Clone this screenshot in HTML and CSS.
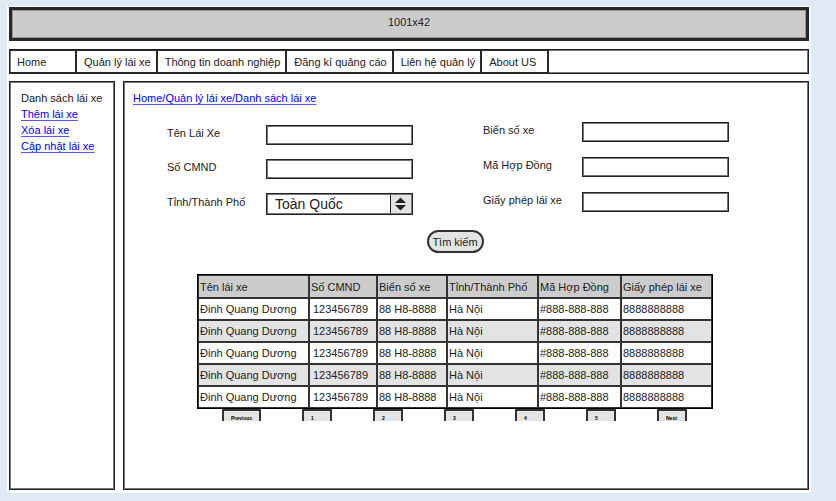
FILE: index.html
```html
<!DOCTYPE html>
<html lang="vi">
<head>
<meta charset="utf-8">
<title>Danh sách lái xe</title>
<link rel="stylesheet" href="styles.css">
</head>
<body>
<div class="sheet">
  <header class="banner">1001x42</header>
  <nav class="menu frame">
    <a class="menu-item menu-home" href="#">Home</a>
    <a class="menu-item" href="#">Quản lý lái xe</a>
    <a class="menu-item" href="#">Thông tin doanh nghiệp</a>
    <a class="menu-item" href="#">Đăng kí quảng cáo</a>
    <a class="menu-item" href="#">Liên hệ quản lý</a>
    <a class="menu-item menu-about" href="#">About US</a>
  </nav>
  <div class="columns">
    <aside class="sidebar frame">
      <span class="current">Danh sách lái xe</span>
      <a class="link" href="#">Thêm lái xe</a>
      <a class="link" href="#">Xóa lái xe</a>
      <a class="link" href="#">Cập nhật lái xe</a>
    </aside>
    <main class="content frame">
      <a class="link" href="#">Home/Quản lý lái xe/Danh sách lái xe</a>
      <form class="search" id="search">
        <div class="fields fields-left">
          <div class="field"><label for="name">Tên Lái Xe</label><input class="box" id="name" type="text"></div>
          <div class="field"><label for="cmnd">Số CMND</label><input class="box" id="cmnd" type="text"></div>
          <div class="field">
            <label for="province">Tỉnh/Thành Phố</label>
            <div class="picker">
              <select id="province"><option>Toàn Quốc</option></select>
              <svg class="stepper" viewBox="0 0 21 18" aria-hidden="true">
                <path d="M0 0h21v18H0z" fill="#e3e3e3"/>
                <path d="M0 0h1v18H0z" fill="#222"/>
                <path d="M10.500 2.500l5.500 5.500H5zM10.500 15.500l5.500-5.500H5z" fill="#222"/>
              </svg>
            </div>
          </div>
        </div>
        <div class="fields fields-right">
          <div class="field"><label for="plate">Biển số xe</label><input class="box" id="plate" type="text"></div>
          <div class="field"><label for="contract">Mã Hợp Đồng</label><input class="box" id="contract" type="text"></div>
          <div class="field"><label for="licence">Giấy phép lái xe</label><input class="box" id="licence" type="text"></div>
        </div>
      </form>
      <div class="results">
        <button class="submit" type="submit" form="search">Tìm kiếm</button>
        <table class="drivers">
          <colgroup><col class="c-name"><col class="c-cmnd"><col class="c-plate"><col class="c-province"><col class="c-contract"><col class="c-licence"></colgroup>
          <thead>
            <tr><th>Tên lái xe</th><th>Số CMND</th><th>Biển số xe</th><th>Tỉnh/Thành Phố</th><th>Mã Hợp Đồng</th><th>Giấy phép lái xe</th></tr>
          </thead>
          <tbody>
            <tr><td>Đinh Quang Dương</td><td>123456789</td><td>88 H8-8888</td><td>Hà Nội</td><td>#888-888-888</td><td>8888888888</td></tr>
            <tr><td>Đinh Quang Dương</td><td>123456789</td><td>88 H8-8888</td><td>Hà Nội</td><td>#888-888-888</td><td>8888888888</td></tr>
            <tr><td>Đinh Quang Dương</td><td>123456789</td><td>88 H8-8888</td><td>Hà Nội</td><td>#888-888-888</td><td>8888888888</td></tr>
            <tr><td>Đinh Quang Dương</td><td>123456789</td><td>88 H8-8888</td><td>Hà Nội</td><td>#888-888-888</td><td>8888888888</td></tr>
            <tr><td>Đinh Quang Dương</td><td>123456789</td><td>88 H8-8888</td><td>Hà Nội</td><td>#888-888-888</td><td>8888888888</td></tr>
          </tbody>
        </table>
        <div class="pager">
          <button class="page page-prev" type="button">Previous</button>
          <button class="page" type="button">1</button>
          <button class="page" type="button">2</button>
          <button class="page" type="button">3</button>
          <button class="page" type="button">4</button>
          <button class="page" type="button">5</button>
          <button class="page" type="button">Next</button>
        </div>
      </div>
    </main>
  </div>
</div>
</body>
</html>
```

FILE: styles.css
```css
* {
  box-sizing: border-box;
}

body {
  margin: 0;
  padding: 6px 25px 8px 7px;
  min-height: 100vh;
  display: flex;
  background: #e0eaf5;
  color: #222;
  font: 11px/16px "Liberation Sans", Arial, sans-serif;
}

.sheet {
  flex: 1;
  min-width: 0;
  display: flex;
  flex-direction: column;
  padding: 1px 2px 3px;
  background: #fff;
}

.frame,
.box,
.picker {
  border: 1px solid #222;
  box-shadow: inset 0 0 0 1px #777;
}

.banner {
  height: 34px;
  border: 3px solid #28282a;
  box-shadow: inset 0 0 0 1px #999;
  background: #ccc;
  padding-top: 4px;
  text-align: center;
}

.menu {
  display: flex;
  height: 25px;
  margin: 8px 0 7px;
}

.menu-item {
  display: flex;
  align-items: center;
  padding: 0 5px 0 7px;
  border: solid #28282a;
  border-width: 1px 2px 1px 0;
  color: inherit;
  text-decoration: none;
  white-space: nowrap;
}

.menu-home,
.menu-about {
  width: 67px;
}

.columns {
  flex: 1;
  display: flex;
  gap: 8px;
}

.sidebar {
  width: 106px;
  padding: 8px 0 8px 11px;
  display: flex;
  flex-direction: column;
  align-items: flex-start;
  white-space: nowrap;
}

.link {
  color: #00f;
  text-decoration: underline;
  text-decoration-color: #55f;
  text-underline-offset: 2px;
}

.content {
  flex: 1;
  min-width: 0;
  padding: 8px 0 0 9px;
}

.search {
  display: grid;
  grid-template-columns: repeat(2, minmax(0, 1fr));
  gap: 70px;
  padding: 16px 79px 0 34px;
}

.fields {
  display: flex;
  flex-direction: column;
}

.fields-left {
  gap: 14px;
  padding-top: 3px;
}

.fields-right {
  gap: 15px;
}

.field {
  display: flex;
  align-items: center;
}

.field label {
  width: 99px;
  padding-bottom: 4px;
}

.box {
  flex: 1;
  min-width: 0;
  height: 20px;
  padding: 0 6px;
  background: #fff;
  font: inherit;
}

.picker {
  position: relative;
  flex: 1;
  height: 22px;
}

.picker select {
  width: 100%;
  height: 20px;
  padding: 0 24px 0 8px;
  border: 0;
  appearance: none;
  background: transparent;
  color: #222;
  font: 14px/20px "Liberation Sans", Arial, sans-serif;
}

.stepper {
  position: absolute;
  top: 1px;
  right: 1px;
  width: 21px;
  height: 18px;
  pointer-events: none;
}

.results {
  display: flex;
  flex-direction: column;
  padding: 15px 95px 0 64px;
}

.submit {
  align-self: center;
  width: 57px;
  height: 23px;
  margin-bottom: 21px;
  padding: 0;
  border: 2px solid #333;
  border-radius: 12px;
  background: #e3e3e3;
  color: #222;
  font: inherit;
}

.drivers {
  width: 100%;
  table-layout: fixed;
  border-collapse: collapse;
  outline: 1px solid #000;
  outline-offset: -1px;
  white-space: nowrap;
}

.c-name { width: 111px; }
.c-cmnd { width: 68px; }
.c-plate { width: 70px; }
.c-province { width: 91px; }
.c-contract { width: 83px; }

.drivers th,
.drivers td {
  height: 22px;
  padding: 0 1px;
  border: 2px solid #333;
  font-weight: normal;
  text-align: left;
}

.drivers th {
  height: 23px;
  background: #ccc;
}

.drivers td:nth-child(2) {
  padding-left: 3px;
}

.drivers tbody tr:nth-child(even) {
  background: #e3e3e3;
}

.pager {
  display: flex;
  gap: 41px;
  padding-left: 25px;
}

.page {
  width: 30px;
  height: 12px;
  padding: 3px 0 0 7px;
  border: 2px solid #333;
  border-bottom: 0;
  background: #e3e3e3;
  color: #000;
  font: bold 5px/6px "Liberation Sans", Arial, sans-serif;
  text-align: left;
}

.page-prev {
  width: 39px;
}
```
